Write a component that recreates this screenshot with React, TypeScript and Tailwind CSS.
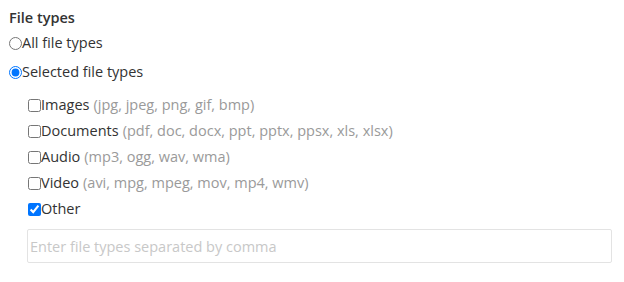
const types = [
  { label: "Images", ext: "(jpg, jpeg, png, gif, bmp)", checked: false },
  { label: "Documents", ext: "(pdf, doc, docx, ppt, pptx, ppsx, xls, xlsx)", checked: false },
  { label: "Audio", ext: "(mp3, ogg, wav, wma)", checked: false },
  { label: "Video", ext: "(avi, mpg, mpeg, mov, mp4, wmv)", checked: false },
  { label: "Other", ext: "", checked: true },
]

export default function App() {
  return (
    <div className="w-[624px] h-[282px] bg-white pl-[9px] pt-[8px] text-[14.5px] text-[#333] font-['Open_Sans',sans-serif]">
      <div className="h-[20px] leading-[20px] font-semibold">File types</div>

      {/* radio choices */}
      <label className="mt-[2px] h-[26px] flex items-center">
        <input type="radio" name="ft" className="m-0 w-[13px] h-[13px]" />
        <span>All file types</span>
      </label>
      <label className="mt-[3px] h-[26px] flex items-center">
        <input type="radio" name="ft" defaultChecked className="m-0 w-[13px] h-[13px]" />
        <span>Selected file types</span>
      </label>

      {/* file type checkboxes */}
      <div className="mt-[7px] pl-[19px] flex flex-col">
        {types.map((t) => (
          <label key={t.label} className="h-[26px] flex items-center">
            <input type="checkbox" defaultChecked={t.checked} className="m-0 w-[13px] h-[13px]" />
            <span>{t.label}</span>
            {t.ext && <span className="ml-[4px] text-[#9a9a9a]">{t.ext}</span>}
          </label>
        ))}
        <input
          type="text"
          placeholder="Enter file types separated by comma"
          className="mt-[7px] -ml-[1px] w-[585px] h-[34px] px-[2px] border border-[#e3e3e3] rounded-[2px] outline-none placeholder:text-[#c8c8c8]"
        />
      </div>
    </div>
  )
}
